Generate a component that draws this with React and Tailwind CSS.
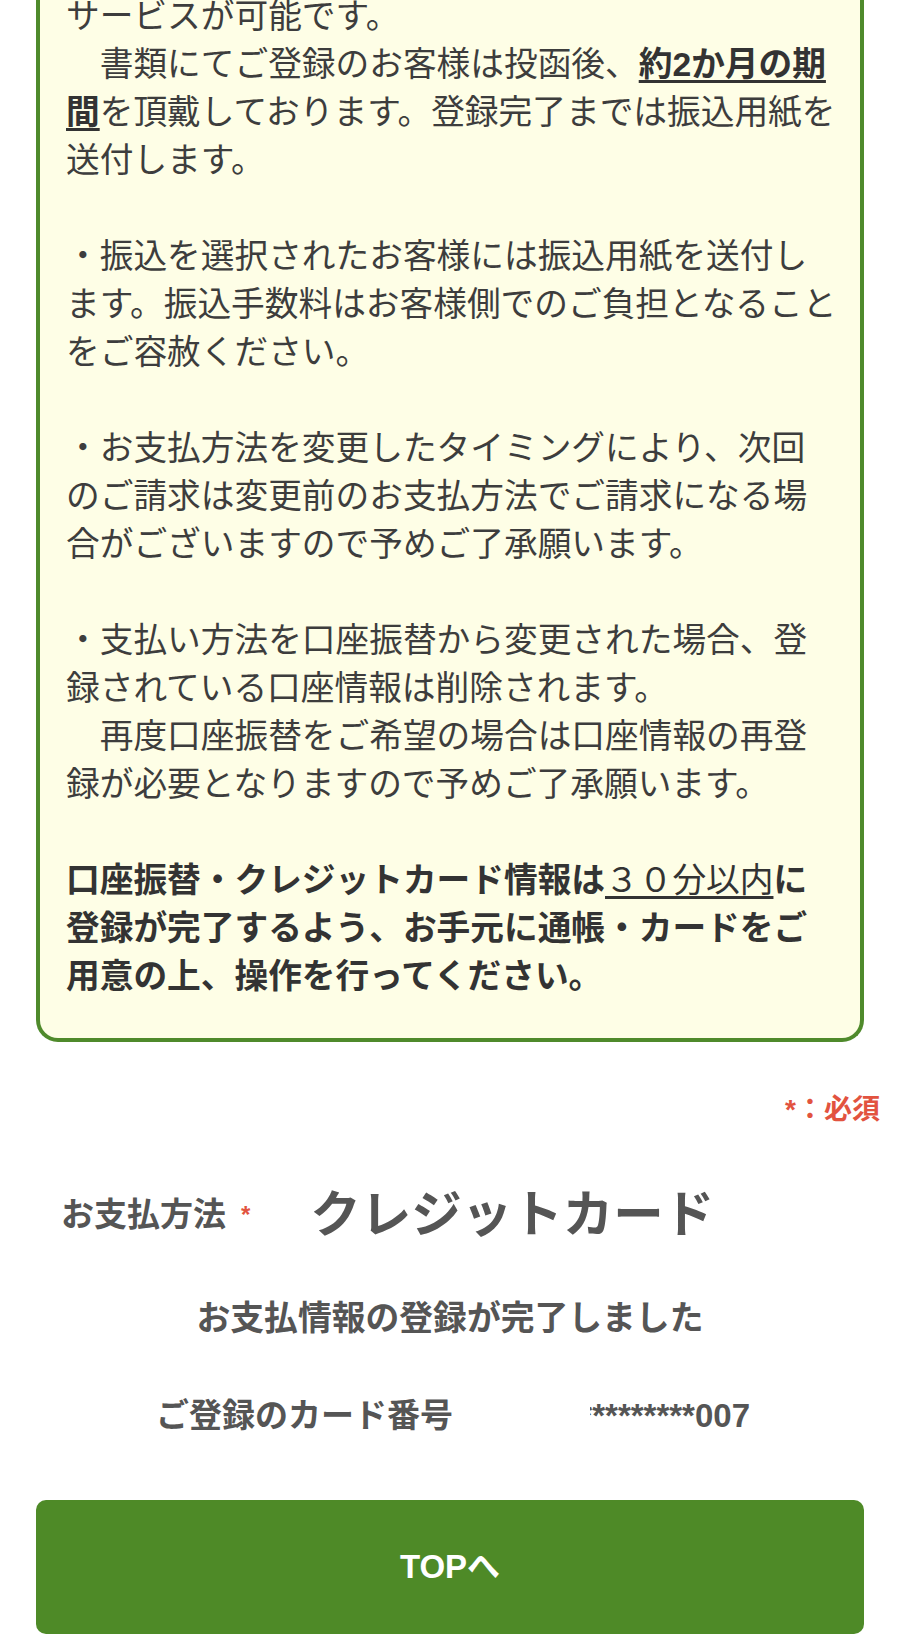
import React from "react";

const font = {
  fontFamily: '"Liberation Sans", "Noto Sans CJK JP", sans-serif',
};

function Note() {
  return (
    <div className="mx-[36px] border-x-4 border-b-4 border-t-0 border-[#4f8a2b] rounded-b-[22px] bg-[#fefee6] pl-[26px] pr-[12px] pb-[38px]">
      <div className="-mt-[8px] text-[33.7px] leading-[48px] text-[#3d3d3d] whitespace-nowrap">
        <p>サービスが可能です。</p>
        <p>
          {"　"}書類にてご登録のお客様は投函後、
          <span className="font-bold underline underline-offset-4 text-[#333]">約2か月の期</span>
        </p>
        <p>
          <span className="font-bold underline underline-offset-4 text-[#333]">間</span>
          を頂戴しております。登録完了までは振込用紙を
        </p>
        <p className="mb-[48px]">送付します。</p>

        <p>・振込を選択されたお客様には振込用紙を送付し</p>
        <p>ます。振込手数料はお客様側でのご負担となること</p>
        <p className="mb-[48px]">をご容赦ください。</p>

        <p>・お支払方法を変更したタイミングにより、次回</p>
        <p>のご請求は変更前のお支払方法でご請求になる場</p>
        <p className="mb-[48px]">合がございますので予めご了承願います。</p>

        <p>・支払い方法を口座振替から変更された場合、登</p>
        <p>録されている口座情報は削除されます。</p>
        <p>{"　"}再度口座振替をご希望の場合は口座情報の再登</p>
        <p className="mb-[48px]">録が必要となりますので予めご了承願います。</p>

        <div className="font-bold text-[#333]">
          <p>
            口座振替・クレジットカード情報は
            <span className="font-normal underline underline-offset-4">３０分以内</span>
            に
          </p>
          <p>登録が完了するよう、お手元に通帳・カードをご</p>
          <p>用意の上、操作を行ってください。</p>
        </div>
      </div>
    </div>
  );
}

function App() {
  return (
    <div className="bg-white min-h-[1646px] overflow-hidden" style={font}>
      <Note />

      <div className="mt-[50px] pr-[20px] text-right text-[28px] leading-[36px] font-bold text-[#e2533f]">
        *：必須
      </div>

      <div className="mt-[57px] flex items-center h-[60px] pl-[61px] text-[#555]">
        <span className="text-[33px] font-bold">お支払方法</span>
        <span className="ml-[15px] text-[24px] font-bold text-[#e2533f]">*</span>
        <span className="ml-[60px] text-[50.5px] font-bold">クレジットカード</span>
      </div>

      <div className="mt-[49px] text-center text-[33.8px] leading-[48px] font-bold text-[#555]">
        お支払情報の登録が完了しました
      </div>

      <div className="mt-[50px] flex items-center h-[48px] text-[33px] font-bold text-[#555]">
        <span className="pl-[156px]">ご登録のカード番号</span>
        <div className="ml-auto mr-[150px] w-[160px] flex justify-end overflow-hidden whitespace-nowrap">
          <span>*********007</span>
        </div>
      </div>

      <button className="mt-[60px] mx-[36px] w-[828px] h-[134px] rounded-[10px] bg-[#4e8a27] text-white text-[33px] font-bold flex items-center justify-center">
        TOPへ
      </button>
    </div>
  );
}

export default App;
